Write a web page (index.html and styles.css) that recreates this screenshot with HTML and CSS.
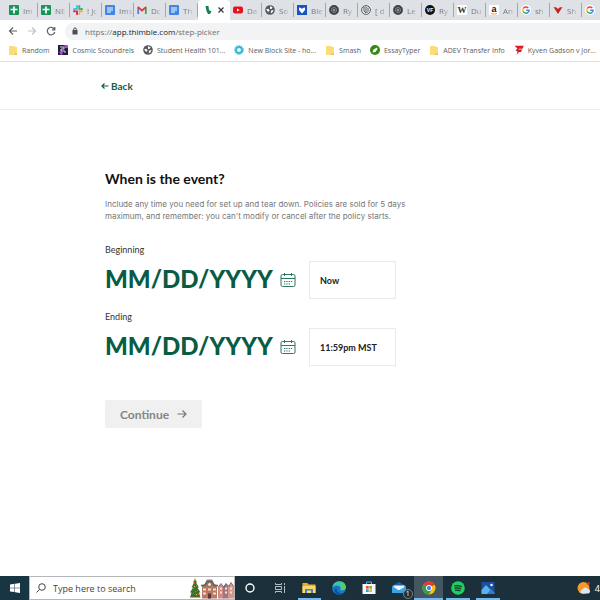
FILE: index.html
```html
<!DOCTYPE html>
<html lang="en">
  <head>
    <meta charset="UTF-8" />
    <meta name="viewport" content="width=device-width, initial-scale=1.0" />
    <title>When is the event?</title>
    <link rel="stylesheet" href="styles.css">
  </head>
  <body>
    <!-- shared icons -->
    <svg class="sprite" aria-hidden="true">
      <symbol id="sheet" viewBox="0 0 10 10">
        <rect width="10" height="10" rx="1" fill="#18935a" />
        <path d="M1.500 4.500h7M5 1.500v7" stroke="#fff" stroke-width="1.700" />
      </symbol>
      <symbol id="doc" viewBox="0 0 10 10">
        <rect width="10" height="10" rx="1" fill="#4285e8" />
        <path d="M2 3h6M2 5h6M2 7h4" stroke="#fff" />
      </symbol>
      <symbol id="globe" viewBox="0 0 10 10">
        <circle cx="5" cy="5" r="4.800" fill="#55595e" />
        <path d="M1.200 4.200l2-.4 1.400 1.400-.8 1.600-1.400-.6zM5 1.200l2.600 1-.8 1.600-1.800.2zM6.200 5.400l2.400-.4-1.200 2.600-1.800.6z" fill="#fff" />
      </symbol>
      <symbol id="knot" viewBox="0 0 10 10">
        <circle cx="5" cy="5" r="4.900" fill="#3f4246" />
        <circle cx="5" cy="5" r="2.500" fill="none" stroke="#96999e" stroke-width=".8" />
        <circle cx="5" cy="5" r="1" fill="#b4b6b9" />
      </symbol>
      <symbol id="google" viewBox="0 0 10 10">
        <circle cx="5" cy="5" r="5" fill="#fff" />
        <g fill="none" stroke-width="1.500">
          <path d="M7.300 2.900A3.200 3.200 0 0 0 2.200 3.500" stroke="#ea4335" />
          <path d="M2.200 3.500a3.200 3.200 0 0 0 0 3" stroke="#fbbc05" />
          <path d="M2.200 6.500a3.200 3.200 0 0 0 4.900.9" stroke="#34a853" />
          <path d="M7.100 7.400A3.200 3.200 0 0 0 8.100 5.200H5.200" stroke="#4285f4" />
        </g>
      </symbol>
      <symbol id="folder" viewBox="0 0 10 10">
        <path d="M1 1h5l1 1h2v8H1z" fill="#fbdc78" />
        <path d="M7 8h2v2H6z" fill="#efc55a" />
      </symbol>
      <symbol id="calendar" viewBox="0 0 16 16">
        <g fill="none" stroke="#2f7560">
          <rect x="1" y="2.500" width="14" height="12" rx="1.500" />
          <path d="M1 6.500h14M4.500 1v3M11.500 1v3" />
          <path d="M4 9.500h8.500M4 12h6" stroke-dasharray="1.300 1" />
        </g>
      </symbol>
    </svg>

    <header class="browser">
      <div class="tabs">
        <div class="tab"><svg><use href="#sheet" /></svg><span>Im</span></div>
        <div class="tab"><svg><use href="#sheet" /></svg><span>NE</span></div>
        <div class="tab">
          <svg viewBox="0 0 10 10" fill="none" stroke-width="1.900" stroke-linecap="round">
            <path d="M4 1v2.500M1 4h2.500" stroke="#36c5f0" />
            <path d="M6.300 1v3M9 4H8" stroke="#2eb67d" />
            <path d="M6.300 6.300h2.700M6.300 9V8.500" stroke="#ecb22e" />
            <path d="M4 6.300V9M1 6.300h1" stroke="#e01e5a" />
          </svg>
          <span>! Jc</span>
        </div>
        <div class="tab"><svg><use href="#doc" /></svg><span>Ims</span></div>
        <div class="tab">
          <svg viewBox="0 0 10 10" fill="none" stroke-width="1.800">
            <path d="M1.200 9V2.500" stroke="#4285f4" />
            <path d="M8.800 9V2.500" stroke="#34a853" />
            <path d="M.8 2l4.200 3.500L9.200 2" stroke="#e43e30" />
          </svg>
          <span>Dc</span>
        </div>
        <div class="tab"><svg><use href="#doc" /></svg><span>Th</span></div>
        <div class="tab active">
          <svg viewBox="0 0 10 10"><path d="M2.500 1h3l.5 4 2.500 1.500L7 9H5L3.500 6z" fill="#16834f" /></svg>
          <button class="close" aria-label="Close tab">
            <svg viewBox="0 0 8 8"><path d="M1.500 1.500l5 5M6.500 1.500l-5 5" stroke="#33363a" stroke-width="1.200" /></svg>
          </button>
        </div>
        <div class="tab">
          <svg viewBox="0 0 10 10"><rect y="1.500" width="10" height="7" rx="2" fill="#e8101c" /><path d="M4 3.500v3L6.700 5z" fill="#fff" /></svg>
          <span>Da</span>
        </div>
        <div class="tab"><svg><use href="#globe" /></svg><span>So</span></div>
        <div class="tab">
          <svg viewBox="0 0 10 10"><rect width="10" height="10" fill="#1852c4" /><path d="M2 2.500l2 .5 1 1 1-1 2-.5v2.500L5 8.500 2 5z" fill="#fff" /></svg>
          <span>Ble</span>
        </div>
        <div class="tab"><svg><use href="#knot" /></svg><span>Ry</span></div>
        <div class="tab">
          <svg viewBox="0 0 10 10" fill="none" stroke="#55595e"><circle cx="5" cy="5" r="4.400" fill="#f1f1f2" /><path d="M3 2v4l2 2M5 1.500v6M7 2.500v4L5.500 8" /></svg>
          <span>[ d</span>
        </div>
        <div class="tab"><svg><use href="#knot" /></svg><span>Le</span></div>
        <div class="tab">
          <svg viewBox="0 0 10 10"><circle cx="5" cy="5" r="5" fill="#111" /><text class="logo-vf" x="5" y="7" text-anchor="middle">VF</text></svg>
          <span>Ry</span>
        </div>
        <div class="tab">
          <svg viewBox="0 0 10 10"><rect width="10" height="10" rx="1" fill="#fff" /><text class="logo-wiki" x="5" y="8" text-anchor="middle">W</text></svg>
          <span>Du</span>
        </div>
        <div class="tab">
          <svg viewBox="0 0 10 10"><rect width="10" height="10" rx="1" fill="#fff" /><text class="logo-amazon" x="5" y="7" text-anchor="middle">a</text><path d="M2 8.500q3 1.200 6 0" fill="none" stroke="#f5a037" /></svg>
          <span>An</span>
        </div>
        <div class="tab"><svg><use href="#google" /></svg><span>sh</span></div>
        <div class="tab">
          <svg viewBox="0 0 10 10"><path d="M.5 2l3 .5L5 4l1.500-1.500 3-.5L5 9z" fill="#c8231f" /></svg>
          <span>Sh</span>
        </div>
        <div class="tab"><svg><use href="#google" /></svg></div>
      </div>

      <div class="toolbar">
        <button aria-label="Go back"><svg viewBox="0 0 10 10"><path d="M9 5H1.500M5 1.500L1.500 5 5 8.500" /></svg></button>
        <button aria-label="Go forward" disabled><svg viewBox="0 0 10 10"><path d="M1 5h7.500M5 1.500L8.500 5 5 8.500" /></svg></button>
        <button aria-label="Reload"><svg viewBox="0 0 10 10"><path d="M8.300 3A3.800 3.800 0 1 0 8.800 6M8.800 1v2.800H6" /></svg></button>
        <div class="address">
          <svg viewBox="0 0 8 8"><rect x="1.500" y="3" width="5" height="4.500" rx=".5" fill="#4a4d51" /><path d="M2.700 3.500V2.200a1.300 1.300 0 0 1 2.600 0v1.300" fill="none" stroke="#4a4d51" /></svg>
          <p>https://<b>app.thimble.com</b>/step-picker</p>
        </div>
      </div>

      <nav class="bookmarks">
        <a href="#"><svg><use href="#folder" /></svg>Random</a>
        <a href="#">
          <svg viewBox="0 0 10 10"><rect width="10" height="10" fill="#241c3c" /><path d="M6 0h4v3H7zM1 7l3-1 1 3-2 1z" fill="#b04bd0" /><path d="M2 2h4v2H3v2h4v2" fill="none" stroke="#d8d2ee" /></svg>
          Cosmic Scoundrels
        </a>
        <a href="#"><svg><use href="#globe" /></svg>Student Health 101...</a>
        <a href="#">
          <svg viewBox="0 0 10 10"><circle cx="5" cy="5" r="3" fill="#e8f8fd" stroke="#36b7dc" stroke-width="2" /><circle cx="5" cy="5" r="4.400" fill="none" stroke="#36b7dc" stroke-dasharray="1.500 1" /></svg>
          New Block Site - ho...
        </a>
        <a href="#"><svg><use href="#folder" /></svg>Smash</a>
        <a href="#">
          <svg viewBox="0 0 10 10"><circle cx="5" cy="5" r="5" fill="#35890f" /><path d="M2.500 7.500l1-3 3.500-2 .5 1.500-2 3z" fill="#fff" /></svg>
          EssayTyper
        </a>
        <a href="#"><svg><use href="#folder" /></svg>ADEV Transfer Info</a>
        <a href="#">
          <svg viewBox="0 0 10 10"><path d="M.5.800h9.300L8.500 3.800H5L4.500 4.500h3.800L7 7H5L2.500 10 3.500 6.500 1.500 5.500l2-2z" fill="#d51f26" /></svg>
          Kyven Gadson v Jor...
        </a>
      </nav>
    </header>

    <div class="site-header">
      <a class="back" href="#">
        <svg viewBox="0 0 8 8"><path d="M7.500 4H1M3.500 1.500L1 4l2.500 2.500" /></svg>
        Back
      </a>
    </div>

    <main>
      <form>
        <h1>When is the event?</h1>
        <p class="intro">
          Include any time you need for set up and tear down. Policies are sold for 5 days
          maximum, and remember: you can't modify or cancel after the policy starts.
        </p>

        <label for="start-date">Beginning</label>
        <div class="row">
          <input class="date" id="start-date" type="text" placeholder="MM/DD/YYYY" />
          <button class="pick" type="button" aria-label="Pick the first day"><svg><use href="#calendar" /></svg></button>
          <select class="time" aria-label="Beginning time">
            <option>Now</option>
          </select>
        </div>

        <label for="end-date">Ending</label>
        <div class="row">
          <input class="date" id="end-date" type="text" placeholder="MM/DD/YYYY" />
          <button class="pick" type="button" aria-label="Pick the last day"><svg><use href="#calendar" /></svg></button>
          <select class="time" aria-label="Ending time">
            <option>11:59pm MST</option>
          </select>
        </div>

        <button class="continue" disabled>
          Continue
          <svg viewBox="0 0 10 10"><path d="M.5 5h8.500M5.500 1.500L9 5 5.500 8.500" /></svg>
        </button>
      </form>
    </main>

    <footer class="taskbar">
      <button class="start" aria-label="Start">
        <svg viewBox="0 0 10 10" fill="#fff"><path d="M0 1.400L4.500.8v3.900H0zM5 .7L10 0v4.700H5zM0 5.200h4.500v3.900L0 8.500zM5 5.200h5V10l-5-.7z" /></svg>
      </button>
      <div class="search">
        <svg class="lens" viewBox="0 0 10 10"><circle cx="6" cy="4" r="3.300" /><path d="M3.600 6.400L.5 9.500" /></svg>
        <input type="text" placeholder="Type here to search" aria-label="Search" />
        <svg class="village" viewBox="0 0 44 21">
          <path d="M5 1l2 4-1 0 3 5-1.500 0 3 5-1.500 0 1.500 5H0l1.500-5H0l3-5H1.500l2.500-5H3z" fill="#3f7030" />
          <path d="M4 5h1M6 8h1M3 11h1M7 13h1M3 16h1M8 17h1M5 14h1" stroke="#e05b2f" />
          <path d="M5 1v2M4 9h1M6 17h1" stroke="#f5c945" />
          <path d="M12 21V8l3-2 2-4h5l2 4 3 2v13z" fill="#b9776c" />
          <path d="M11 8h4l2-4h5l2 4h4" fill="none" stroke="#436f65" stroke-width="1.500" />
          <circle cx="19.500" cy="7" r="2" fill="#f5e8c0" stroke="#446" stroke-width=".6" />
          <path d="M13 12h3M18 12h3M23 12h3M13 16h3M23 16h3" stroke="#f7dfad" stroke-width="2" />
          <path d="M18 21v-5h3v5z" fill="#5d3639" />
          <path d="M28 21V10l3-4 3 4v11z" fill="#cf8a83" />
          <path d="M33 21V9l3-3 3 3v12z" fill="#9e7881" />
          <path d="M38 21V9l3-4 3 4v12z" fill="#d39688" />
          <path d="M30 11h2M35 11h2M40 11h2M30 15h2M35 15h2M40 15h2" stroke="#f5e2d4" stroke-width="2" />
          <path d="M28 10l3-4 3 4 2-4 3 3 2-4 3 4" fill="none" stroke="#6c5c70" stroke-width=".8" />
        </svg>
      </div>
      <div class="apps">
        <button class="app" aria-label="Cortana"><svg viewBox="0 0 14 14"><circle cx="7" cy="7" r="4" fill="none" stroke="#fff" stroke-width="1.400" /></svg></button>
        <button class="app" aria-label="Task view">
          <svg viewBox="0 0 14 14" fill="none" stroke="#b4bfc5"><path d="M2.500 2v1.500h6V2M2.500 12v-1.500h6V12M2.500 5.500h6v3h-6zM11.500 2v2M11.500 5v7" /></svg>
        </button>
        <button class="app open" aria-label="File Explorer">
          <svg viewBox="0 0 14 14"><path d="M.5 2h5l1 1.500h7V12H.5z" fill="#e9b02f" /><path d="M.5 5h13v7H.5z" fill="#fbd86c" /><path d="M3 12V8h8v4H9V9.500H5V12z" fill="#4288bd" /></svg>
        </button>
        <button class="app" aria-label="Edge">
          <svg viewBox="0 0 14 14">
            <circle cx="7" cy="7" r="6.800" fill="#1877c9" />
            <path d="M.3 6.500C1 2.500 4 .2 7.200.2c4 0 6.600 3 6.600 5.800 0 2-1.500 3.300-3.500 3.300-1.500 0-2.300-.6-1.500-1.600C9 4.500 4 3 .3 6.500z" fill="#38c6b1" />
            <path d="M9 .5c3 .8 4.800 3 4.800 5.500 0 2-1.500 3.300-3.500 3.300-1.500 0-2.300-.6-1.500-1.600z" fill="#5ad05c" />
            <path d="M5 6.500c-1.500 3.500 2 6.500 6 5.500-3 2.500-8 1.500-8.500-2.500 0-1.500 1-2.500 2.500-3z" fill="#0c509f" />
          </svg>
        </button>
        <button class="app" aria-label="Store">
          <svg viewBox="0 0 14 14"><path d="M4.500 3V1h5v2" fill="none" stroke="#58b6e8" /><path d="M.5 3h13v10H.5z" fill="#f5f7f8" /><path d="M4 5h2.700v2.700H4z" fill="#ea4f2d" /><path d="M7.300 5H10v2.700H7.300z" fill="#7eb52c" /><path d="M4 8.300h2.700V11H4z" fill="#2ba0dd" /><path d="M7.300 8.300H10V11H7.300z" fill="#f2b720" /></svg>
        </button>
        <button class="app" aria-label="Mail">
          <svg viewBox="0 0 14 14"><path d="M0 5l7-4 7 4v7H0z" fill="#1565b5" /><path d="M1.500 4.500h11V9h-11z" fill="#f2f6fa" /><path d="M0 5l7 4.500L14 5v7H0z" fill="#37a4e8" /></svg>
          <span class="badge">1</span>
        </button>
        <button class="app open current" aria-label="Chrome">
          <svg viewBox="0 0 14 14">
            <circle cx="7" cy="7" r="6.500" fill="#fbc318" />
            <path d="M7 7L1.400 3.700A6.500 6.500 0 0 1 12.600 3.700z" fill="#e33b2e" />
            <path d="M7 7L1.400 3.700A6.500 6.500 0 0 0 7 13.500L9.600 8.500z" fill="#2da14c" />
            <circle cx="7" cy="7" r="2.700" fill="#4285f4" stroke="#fff" />
          </svg>
        </button>
        <button class="app open" aria-label="Spotify">
          <svg viewBox="0 0 14 14"><circle cx="7" cy="7" r="6.800" fill="#1ed05e" /><path d="M3 5q4-1.200 8 .7M3.500 7.300q3.500-1 6.700.7M4 9.500q3-.8 5.500.6" fill="none" stroke="#123321" stroke-width="1.200" /></svg>
        </button>
        <button class="app open" aria-label="Photos">
          <svg viewBox="0 0 14 14"><rect x=".5" y="1" width="13" height="12" fill="#1c4fa0" /><path d="M.5 13V9L5 4l8.500 9z" fill="#59b2ee" /><path d="M6 13l4-5 3.500 3.500V13z" fill="#2c7dd0" /><circle cx="10.500" cy="4" r="1.200" fill="#fff" /></svg>
        </button>
      </div>
      <div class="weather">
        <svg viewBox="0 0 14 14"><circle cx="6.500" cy="7" r="6" fill="#f39a2b" /><circle cx="11.500" cy="2.500" r="1.500" fill="#c23a20" /><path d="M5.500 12.500a2 2 0 0 1 0-4 3 3 0 0 1 5.500-.5 2.300 2.300 0 0 1 .5 4.500z" fill="#dce6f2" /></svg>
        4
      </div>
    </footer>
  </body>
</html>
```
FILE: styles.css
```css
* {
  box-sizing: border-box;
}

body {
  margin: 0;
  min-height: 100vh;
  display: flex;
  flex-direction: column;
  background: #fff;
  color: #111;
  font-family: Lato, "Liberation Sans", sans-serif;
  overflow-x: hidden;
}

button,
input,
select {
  font-family: inherit;
  border: none;
  padding: 0;
  margin: 0;
  background: none;
}

a {
  color: inherit;
  text-decoration: none;
}

svg {
  display: block;
  flex: none;
}

.sprite {
  position: absolute;
  width: 0;
  height: 0;
}

/* browser */
.browser {
  font-family: "Open Sans", "Noto Sans", sans-serif;
  border-bottom: 1px solid #dfe1e3;
}

.tabs {
  display: flex;
  height: 20px;
  padding-left: 6px;
  background: #dee1e6;
  overflow: hidden;
}

.tab {
  flex: 0 0 32px;
  display: flex;
  align-items: center;
  gap: 4px;
  padding-left: 3px;
  font-size: 8px;
  color: #74777c;
  border-right: 1px solid #a4a7ac;
  border-image: linear-gradient(transparent 20%, #a4a7ac 20%, #a4a7ac 80%, transparent 80%) 1;
}

.tab svg {
  width: 10px;
  height: 10px;
}

.tab span {
  white-space: nowrap;
  mask-image: linear-gradient(to right, #000 40%, rgba(0, 0, 0, 0.3));
}

.tab.active {
  background: #fff;
  border-image: none;
  border-color: #fff;
  border-radius: 4px 4px 0 0;
  padding-left: 5px;
}

.tab .close svg {
  width: 8px;
  height: 8px;
}

.logo-vf {
  font: bold 5px "Liberation Sans", sans-serif;
  fill: #fff;
}

.logo-wiki {
  font: bold 9px "Liberation Serif", serif;
  fill: #333;
}

.logo-amazon {
  font: bold 9px "Liberation Sans", sans-serif;
  fill: #111;
}

.toolbar {
  display: flex;
  align-items: center;
  gap: 9px;
  height: 22px;
  padding-left: 8px;
}

.toolbar button svg {
  width: 10px;
  height: 10px;
  fill: none;
  stroke: #5f6368;
  stroke-width: 1.2;
}

.toolbar button:disabled svg {
  stroke: #c0c3c7;
}

.address {
  flex: 1;
  display: flex;
  align-items: center;
  gap: 6px;
  height: 17px;
  padding-left: 6px;
  border-radius: 8px 0 0 8px;
  background: #f1f3f4;
  font-size: 8px;
  color: #6b6f74;
}

.address svg {
  width: 8px;
  height: 8px;
}

.address p {
  margin: 0;
}

.address b {
  font-weight: normal;
  color: #222427;
}

.bookmarks {
  display: flex;
  align-items: center;
  gap: 9px;
  height: 19px;
  padding: 0 4px 3px 8px;
  font-size: 7px;
  color: #5a5d61;
  white-space: nowrap;
}

.bookmarks a {
  display: flex;
  align-items: center;
  gap: 4px;
}

.bookmarks svg {
  width: 10px;
  height: 10px;
}

/* page */
.site-header {
  display: flex;
  align-items: center;
  height: 48px;
  padding-left: 101px;
  border-bottom: 1px solid #eee;
}

.back {
  display: flex;
  align-items: center;
  gap: 2px;
  font-size: 10px;
  font-weight: bold;
  color: #125c45;
}

.back svg {
  width: 8px;
  height: 8px;
  fill: none;
  stroke: #125c45;
  stroke-width: 1.2;
}

main {
  flex: 1;
  padding: 60px 105px 40px;
}

form {
  max-width: 310px;
}

h1 {
  margin: 0 0 10px;
  font-size: 14px;
  line-height: 18px;
}

.intro {
  margin: 0 0 22px;
  font-family: Inter, "Open Sans", sans-serif;
  font-size: 8px;
  line-height: 12px;
  color: #777;
}

label {
  display: block;
  font-size: 9px;
  line-height: 12px;
  color: #333;
}

.row {
  display: flex;
  align-items: center;
  height: 38px;
  margin: 5px 0 12px;
}

.date {
  width: 175px;
  padding-bottom: 3px;
  font-size: 24px;
  font-weight: 900;
  color: #075c43;
}

.date::placeholder {
  color: #075c43;
  opacity: 1;
}

.pick svg {
  width: 16px;
  height: 16px;
}

.time {
  appearance: none;
  width: 87px;
  height: 38px;
  margin-left: 13px;
  padding-left: 10px;
  border: 1px solid #eaeaea;
  font-size: 9px;
  font-weight: bold;
  color: #222;
}

.continue {
  display: flex;
  align-items: center;
  gap: 8px;
  height: 28px;
  margin-top: 34px;
  padding: 0 15px;
  border-radius: 2px;
  background: #f0f0f0;
  font-size: 12px;
  font-weight: bold;
  color: #858585;
}

.continue svg {
  width: 10px;
  height: 10px;
  fill: none;
  stroke: #777;
  stroke-width: 1.2;
}

/* taskbar */
.taskbar {
  display: flex;
  height: 24px;
  background: #1c303c;
  color: #fff;
  font-family: "Open Sans", "Noto Sans", sans-serif;
  font-size: 9px;
}

.start {
  flex: 0 0 29px;
  display: grid;
  place-items: center;
  background: #173542;
}

.start svg {
  width: 10px;
  height: 10px;
}

.search {
  flex: 0 0 206px;
  display: flex;
  align-items: center;
  border: 1px solid #b4b8bb;
  background: #fff;
}

.lens {
  width: 10px;
  height: 10px;
  margin: 0 7px 0 6px;
  fill: none;
  stroke: #444;
}

.search input {
  flex: 1;
  min-width: 0;
  font-size: 9px;
}

.search input::placeholder {
  color: #444;
  opacity: 1;
}

.village {
  width: 44px;
  height: 22px;
}

.apps {
  flex: 0 0 268px;
  display: grid;
  grid-template-columns: repeat(9, 1fr);
}

.app {
  position: relative;
  display: grid;
  place-items: center;
}

.app svg {
  width: 14px;
  height: 14px;
}

.app.open::after {
  content: "";
  position: absolute;
  left: 3px;
  right: 3px;
  bottom: 0;
  height: 2px;
  background: #76b9ed;
}

.app.current {
  background: #465660;
}

.app.current::after {
  left: 0;
  right: 0;
}

.badge {
  position: absolute;
  right: 1px;
  bottom: 1px;
  width: 10px;
  border: 1px solid #78838a;
  border-radius: 5px;
  background: #1c303c;
  color: #fff;
  font-size: 7px;
  line-height: 8px;
}

.weather {
  display: flex;
  align-items: center;
  gap: 4px;
  margin-left: auto;
}

.weather svg {
  width: 14px;
  height: 14px;
}
```
